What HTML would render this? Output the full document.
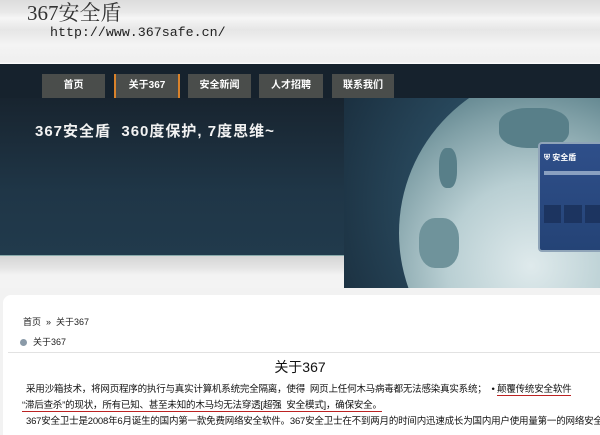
<!DOCTYPE html>
<html><head><meta charset="utf-8"><style>
*{margin:0;padding:0;box-sizing:border-box}
body{width:600px;height:428px;overflow:hidden;background:#f2f2f2;font-family:"Liberation Sans","Noto Sans CJK SC",sans-serif;position:relative}
.top{position:absolute;left:0;top:0;width:600px;height:64px;background:linear-gradient(#dcdcdc 0,#e8e8e8 12px,#f6f6f6 18px,#e6e6e6 30px,#f4f4f4 45px,#efefef 62px,#fff 64px)}
.logo{position:absolute;left:27px;top:1px;font-family:"Liberation Serif","Noto Serif CJK SC",serif;font-size:21px;line-height:24px;color:#333}
.url{position:absolute;left:50px;top:25px;font-family:"Liberation Mono",monospace;font-size:13.3px;line-height:16px;color:#222}
.band{position:absolute;left:0;top:64px;width:600px;height:224px;background:#16222d}
.leftp{position:absolute;left:0;top:98px;width:344px;height:157px;background:linear-gradient(#18242f,#1f3647 60%,#213a4c)}
.gray{position:absolute;left:0;top:255px;width:344px;height:33px;background:linear-gradient(#d5d5d5,#e6e6e6 40%,#f3f3f3 60%,#f3f3f3);border-top:1px solid #8aa}
.globebg{position:absolute;left:344px;top:98px;width:256px;height:190px;background:radial-gradient(circle at 80% 55%,#4a7080,#27465a 60%,#1b3040);overflow:hidden}
.globe{position:absolute;left:55px;top:-30px;width:330px;height:330px;border-radius:50%;background:radial-gradient(circle at 40% 60%,#dfeaec 0,#b9cfd3 30%,#7f9fa6 55%,#4c737e 75%,#2c4e5c)}
.land{position:absolute;background:#587f89;border-radius:40%}
.app{position:absolute;left:194px;top:44px;width:70px;height:110px;background:linear-gradient(#2f4f8a,#244376);border:2px solid #8fa4b8;border-radius:4px}
.nav{position:absolute;top:74px;height:24px;background:#4a4d4b;color:#fff;font-size:10px;font-weight:bold;text-align:center;line-height:24px}
.nav.on{border-left:2px solid #d9822b;border-right:2px solid #d9822b}
.slogan{position:absolute;left:35px;top:120px;color:#f2f2f2;font-size:15px;font-weight:bold;letter-spacing:1px;font-family:"Liberation Sans","Noto Sans CJK SC",sans-serif}
.panel{position:absolute;left:3px;top:295px;width:600px;height:140px;background:#fff;border-top-left-radius:8px}
.crumb{position:absolute;left:23px;top:315px;font-size:9px;color:#222}
.sub{position:absolute;left:20px;top:335px;font-size:9px;color:#222}
.dot{display:inline-block;width:7px;height:7px;border-radius:50%;background:#8a9aa8;margin-right:6px;vertical-align:-1px}
.hr{position:absolute;left:8px;top:352px;width:592px;height:1px;background:#e2e2e2}
.h{position:absolute;left:0;width:600px;text-align:center;top:357px;font-size:14px;color:#111}
.p{position:absolute;left:26px;font-size:9.5px;color:#111;white-space:nowrap;letter-spacing:-0.2px}
.u{border-bottom:1px solid #b22}
</style></head><body>
<div class="top"><div class="logo">367安全盾</div><div class="url">http://www.367safe.cn/</div></div>
<div class="band"></div>
<div class="leftp"></div>
<div class="gray"></div>
<div class="globebg"><div class="globe">
<div class="land" style="left:40px;top:80px;width:18px;height:40px"></div>
<div class="land" style="left:100px;top:40px;width:70px;height:40px"></div>
<div class="land" style="left:20px;top:150px;width:40px;height:50px;background:#6f939b"></div>
<div class="land" style="left:140px;top:230px;width:140px;height:80px"></div>
</div>
<div class="app"><div style="margin:8px 4px;color:#fff;font-size:8px;font-weight:bold">⛨ 安全盾</div>
<div style="margin:4px;height:4px;background:#8aa0c0"></div>
<div style="margin:30px 4px 0;display:flex;gap:3px"><div style="width:18px;height:18px;background:#1c3460"></div><div style="width:18px;height:18px;background:#1c3460"></div><div style="width:18px;height:18px;background:#1c3460"></div></div></div>
</div>
<div class="nav" style="left:42px;width:63px">首页</div>
<div class="nav on" style="left:114px;width:66px">关于367</div>
<div class="nav" style="left:188px;width:63px">安全新闻</div>
<div class="nav" style="left:259px;width:64px">人才招聘</div>
<div class="nav" style="left:332px;width:62px">联系我们</div>
<div class="slogan">367安全盾&nbsp; 360度保护, 7度思维~</div>
<div class="panel"></div>
<div class="crumb">首页 &nbsp;» &nbsp;关于367</div>
<div class="sub"><span class="dot"></span>关于367</div>
<div class="hr"></div>
<div class="h">关于367</div>
<div class="p" style="top:381px">采用沙箱技术，将网页程序的执行与真实计算机系统完全隔离，使得&nbsp; 网页上任何木马病毒都无法感染真实系统；&nbsp; • <span class="u">颠覆传统安全软件</span></div>
<div class="p" style="top:397px;left:22px"><span class="u">“滞后查杀”的现状，所有已知、甚至未知的木马均无法穿透[超强&nbsp; 安全模式]，确保安全。</span></div>
<div class="p" style="top:413px;left:26px">367安全卫士是2008年6月诞生的国内第一款免费网络安全软件。367安全卫士在不到两月的时间内迅速成长为国内用户使用量第一的网络安全</div>
</body></html>
